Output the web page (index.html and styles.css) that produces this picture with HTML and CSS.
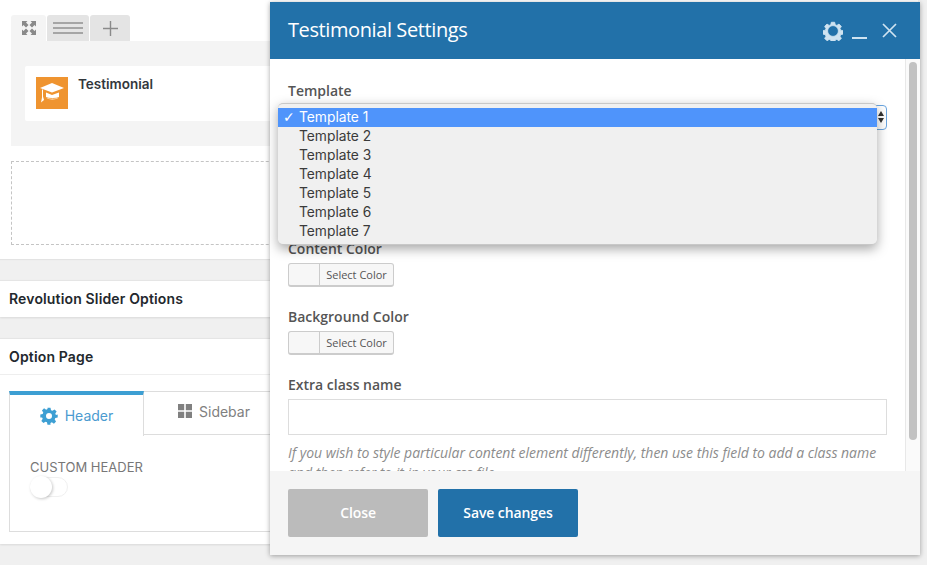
FILE: index.html
```html
<!DOCTYPE html>
<html lang="en">
<head>
    <meta charset="UTF-8">
    <title>Testimonial Settings</title>
    <link rel="stylesheet" href="styles.css">
</head>
<body>
    <div class="builder">
        <div class="row-tabs">
            <span class="row-tab row-tab-active">
                <svg width="14" height="14" viewBox="0 0 14 14" fill="#8a8a8a"><path d="M0 0h5.500L4 1.500 6.500 4 4 6.500 1.500 4 0 5.500zM14 0v5.500L12.500 4 10 6.500 7.500 4 10 1.500 8.500 0zM0 14V8.500L1.500 10 4 7.500 6.500 10 4 12.500 5.500 14zM14 14H8.500l1.500-1.500L7.500 10 10 7.500l2.500 2.500L14 8.500z"/></svg>
            </span>
            <span class="row-tab row-tab-lines"><i></i><i></i><i></i></span>
            <span class="row-tab row-tab-plus">
                <svg width="15" height="15" viewBox="0 0 15 15" fill="#8a8a8a"><path d="M6.800 0h1.400v6.800H15v1.400H8.200V15H6.800V8.200H0V6.800h6.800z"/></svg>
            </span>
        </div>
        <div class="row-body">
            <div class="element">
                <span class="element-icon">
                    <svg width="26" height="22" viewBox="0 0 26 22" fill="#fff"><path d="M13 1 25 6 13 10.500 1 6z"/><path d="M7 10.500v5c2 2.500 10.500 2.500 13 0v-5l-7 2.500z"/><path d="M7 15.400c3 1.500 10 1.500 13 0" fill="none" stroke="#ef9430" stroke-width=".8"/><path d="M3 7.500h1v7l1 3.500-3 2.500 1-5z"/></svg>
                </span>
                <span class="element-name">Testimonial</span>
            </div>
        </div>
        <div class="drop-zone"></div>
    </div>

    <div class="panel panel-slider">
        <h3 class="panel-title">Revolution Slider Options</h3>
    </div>

    <div class="panel panel-options">
        <h3 class="panel-title panel-title-line">Option Page</h3>
        <div class="tabs-wrap">
            <div class="tabs">
                <span class="tab tab-active">
                    <svg width="18" height="18" viewBox="0 0 24 24" fill="#3d9fd3"><path fill-rule="evenodd" d="M10 1h4l.7 3.200 1.900.8 2.800-1.800 2.800 2.800-1.800 2.800.8 1.900L23.600 10v4l-3.200.7-.8 1.900 1.800 2.800-2.800 2.800-2.800-1.800-1.900.8L14 23.600h-4l-.7-3.200-1.900-.8-2.800 1.800-2.800-2.800 1.800-2.800-.8-1.900L.4 14v-4l3.200-.7.8-1.900-1.800-2.800 2.800-2.800 2.800 1.800 1.900-.8zM12 8a4 4 0 1 0 0 8 4 4 0 0 0 0-8z"/></svg>
                    Header
                </span>
                <span class="tab tab-plain">
                    <svg width="14" height="14" viewBox="0 0 14 14" fill="#808080"><path d="M0 0h6.200v6.200H0zM7.800 0H14v6.200H7.800zM0 7.800h6.200V14H0zM7.800 7.800H14V14H7.800z"/></svg>
                    Sidebar
                </span>
            </div>
            <div class="tab-content">
                <div class="field-caption">CUSTOM HEADER</div>
                <div class="switch"><span class="switch-knob"></span></div>
            </div>
        </div>
    </div>

    <div class="modal">
        <div class="modal-head">
            <h2 class="modal-title">Testimonial Settings</h2>
            <div class="modal-actions">
                <svg width="20" height="20" viewBox="0 0 24 24" fill="#cfe3f1" stroke="#cfe3f1" stroke-width="1" stroke-linejoin="round"><path fill-rule="evenodd" d="M10 1.500h4l.7 3 1.900.8 2.600-1.600 2.800 2.800-1.600 2.600.8 1.900 3 .7v4l-3 .7-.8 1.900 1.600 2.600-2.800 2.800-2.600-1.600-1.900.8-.7 3h-4l-.7-3-1.900-.8-2.600 1.600-2.800-2.800 1.600-2.600-.8-1.900-3-.7v-4l3-.7.8-1.900-1.600-2.600 2.800-2.800 2.600 1.600 1.900-.8zM12 5.500a6.500 6.500 0 1 0 0 13 6.500 6.500 0 0 0 0-13z"/></svg>
                <span class="modal-min"></span>
                <svg width="15" height="15" viewBox="0 0 15 15" stroke="#cfe3f1" stroke-width="1.700" fill="none"><path d="M1 1l13 13M14 1 1 14"/></svg>
            </div>
        </div>
        <div class="modal-body">
            <div class="modal-form">
                <div class="form-group form-group-select">
                    <label class="form-label">Template</label>
                    <div class="select-box"><span class="select-arrows"></span></div>
                </div>
                <div class="form-group">
                    <label class="form-label">Content Color</label>
                    <div class="color-btn"><span class="color-swatch"></span><span class="color-text">Select Color</span></div>
                </div>
                <div class="form-group">
                    <label class="form-label">Background Color</label>
                    <div class="color-btn"><span class="color-swatch"></span><span class="color-text">Select Color</span></div>
                </div>
                <div class="form-group">
                    <label class="form-label">Extra class name</label>
                    <div class="text-input"></div>
                    <p class="form-help">If you wish to style particular content element differently, then use this field to add a class name and then refer to it in your css file.</p>
                </div>
            </div>
            <div class="scroll-track"><span class="scroll-thumb"></span></div>
        </div>
        <div class="modal-foot">
            <span class="btn btn-close">Close</span>
            <span class="btn btn-save">Save changes</span>
        </div>

        <ul class="select-menu">
            <li class="select-item select-item-on">Template 1</li>
            <li class="select-item">Template 2</li>
            <li class="select-item">Template 3</li>
            <li class="select-item">Template 4</li>
            <li class="select-item">Template 5</li>
            <li class="select-item">Template 6</li>
            <li class="select-item">Template 7</li>
        </ul>
    </div>
</body>
</html>
```

FILE: styles.css
```css
/* General */
html, body {
    margin: 0;
    height: 565px;
    overflow: hidden;
}

body {
    position: relative;
    background: #f0f0f0;
    font-family: "Inter", "Liberation Sans", Arial, sans-serif;
    color: #23282d;
}

/* Page builder area */
.builder {
    background: #fff;
    height: 259px;
    margin-right: 9px;
    padding: 15px 0 0 11px;
    box-sizing: border-box;
    box-shadow: 0 1px 1px rgba(0, 0, 0, 0.05);
}

.row-tabs {
    display: flex;
    gap: 1px;
    height: 26px;
}

.row-tab {
    display: flex;
    align-items: center;
    justify-content: center;
    background: #e4e4e4;
    border-radius: 3px 3px 0 0;
    height: 26px;
}

.row-tab-active {
    width: 35px;
    background: #f4f4f4;
}

.row-tab-lines {
    width: 42px;
    flex-direction: column;
    gap: 3px;
}

.row-tab-lines i {
    display: block;
    width: 30px;
    height: 2px;
    background: #a5a5a5;
}

.row-tab-plus {
    width: 40px;
}

.row-body {
    background: #f4f4f4;
    height: 105px;
    padding: 25px 0 0 14px;
    box-sizing: border-box;
}

.element {
    display: flex;
    align-items: flex-start;
    background: #fff;
    height: 55px;
    padding: 11px;
    box-sizing: border-box;
    border-radius: 2px;
}

.element-icon {
    display: flex;
    align-items: center;
    justify-content: center;
    width: 32px;
    height: 32px;
    background: #ef9430;
}

.element-name {
    margin-left: 10px;
    font-size: 13.500px;
    line-height: 14px;
    font-weight: 600;
    color: #32373c;
}

.drop-zone {
    height: 84px;
    margin-top: 15px;
    border: 1px dashed #c4c4c4;
    box-sizing: border-box;
}

/* Panels */
.panel {
    background: #fff;
    margin-right: 9px;
    box-shadow: 0 1px 2px rgba(0, 0, 0, 0.1);
    border-top: 1px solid #e5e5e5;
}

.panel-slider {
    height: 37px;
    margin-top: 21px;
    box-sizing: border-box;
}

.panel-options {
    height: 206px;
    margin-top: 21px;
    box-sizing: border-box;
}

.panel-title {
    margin: 0;
    padding: 10px 9px;
    font-size: 14px;
    line-height: 16px;
    font-weight: 600;
    letter-spacing: 0.15px;
}

.panel-title-line {
    height: 36px;
    box-sizing: border-box;
    border-bottom: 1px solid #eee;
}

.tabs-wrap {
    padding: 16px 0 0 9px;
}

.tabs {
    display: flex;
    height: 44px;
}

.tab {
    display: flex;
    align-items: center;
    justify-content: center;
    gap: 7px;
    font-size: 14px;
    box-sizing: border-box;
}

.tab-active {
    width: 135px;
    height: 45px;
    color: #4b9bd0;
    background: #fff;
    border-top: 4px solid #3d9fd3;
    border-left: 1px solid #ddd;
    border-right: 1px solid #ddd;
}

.tab-plain {
    width: 140px;
    height: 44px;
    color: #808080;
    border-top: 1px solid #ddd;
    border-bottom: 1px solid #ddd;
    padding-bottom: 4px;
}

.tab-content {
    height: 97px;
    padding: 25px 20px 0;
    box-sizing: border-box;
    border: 1px solid #ddd;
    border-top: 0;
}

.field-caption {
    font-size: 13px;
    line-height: 14px;
    color: #777;
}

.switch {
    position: relative;
    width: 38px;
    height: 20px;
    margin-top: 3px;
    border: 1px solid #f0f0f0;
    border-radius: 11px;
    box-sizing: border-box;
}

.switch-knob {
    position: absolute;
    left: -1px;
    top: -2px;
    width: 22px;
    height: 22px;
    border-radius: 50%;
    background: #fff;
    box-shadow: 1px 1px 3px rgba(0, 0, 0, 0.22);
}

/* Modal */
.modal {
    position: absolute;
    left: 270px;
    top: 2px;
    width: 650px;
    height: 553px;
    display: flex;
    flex-direction: column;
    background: #fff;
    box-shadow: 0 1px 5px rgba(0, 0, 0, 0.35);
    font-family: "Open Sans", "Liberation Sans", Arial, sans-serif;
}

.modal-head {
    flex: none;
    display: flex;
    align-items: center;
    justify-content: space-between;
    height: 57px;
    padding: 0 23px 0 18px;
    box-sizing: border-box;
    background: #2271a9;
}

.modal-title {
    margin: 0 0 2px;
    font-size: 20px;
    font-weight: 400;
    letter-spacing: -0.4px;
    color: #fff;
}

.modal-actions {
    display: flex;
    align-items: center;
    gap: 9px;
}

.modal-min {
    display: block;
    width: 15px;
    height: 2px;
    margin: 15px 6px 0 0;
    background: #cfe3f1;
}

.modal-body {
    flex: 1;
    min-height: 0;
    display: flex;
    overflow: hidden;
}

.modal-form {
    flex: 1;
    min-width: 0;
    padding: 22px 18px 0;
}

.form-group {
    margin-bottom: 20px;
}

.form-group-select {
    height: 158px;
    margin-bottom: 0;
}

.form-label {
    display: block;
    margin-bottom: 4px;
    font-size: 14px;
    line-height: 20px;
    font-weight: 600;
    color: #555;
}

.select-box {
    position: relative;
    height: 25px;
    border: 1px solid #6aa5e0;
    border-radius: 4px;
    box-sizing: border-box;
    background: #fff;
}

.select-arrows {
    position: absolute;
    right: 2px;
    top: 5px;
    width: 0;
    height: 0;
    border: 3px solid transparent;
    border-bottom: 5px solid #333;
    border-top: 0;
}

.select-arrows::after {
    content: "";
    position: absolute;
    left: -3px;
    top: 7px;
    border: 3px solid transparent;
    border-top: 5px solid #333;
    border-bottom: 0;
}

.color-btn {
    display: flex;
    width: 106px;
    height: 24px;
    box-sizing: border-box;
    border: 1px solid #ccc;
    border-bottom-width: 2px;
    border-radius: 3px;
    background: #f7f7f7;
    overflow: hidden;
}

.color-swatch {
    width: 30px;
    border-right: 1px solid #ccc;
}

.color-text {
    flex: 1;
    text-align: center;
    font-size: 11px;
    line-height: 21px;
    color: #555;
}

.text-input {
    height: 36px;
    box-sizing: border-box;
    border: 1px solid #ddd;
}

.form-help {
    margin: 8px 0 0;
    font-size: 14px;
    letter-spacing: -0.02px;
    line-height: 20px;
    font-style: italic;
    color: #8c8c8c;
}

.scroll-track {
    flex: none;
    width: 15px;
    border-left: 1px solid #e8e8e8;
    box-sizing: border-box;
    padding: 3px 3px 0;
    background: #fafafa;
}

.scroll-thumb {
    display: block;
    height: 378px;
    border-radius: 4px;
    background: #c2c2c2;
}

.modal-foot {
    flex: none;
    display: flex;
    gap: 10px;
    height: 84px;
    padding: 18px;
    box-sizing: border-box;
    background: #f5f5f5;
}

.btn {
    display: block;
    width: 140px;
    height: 48px;
    border-radius: 2px;
    text-align: center;
    font-size: 14px;
    font-weight: 600;
    letter-spacing: -0.1px;
    line-height: 48px;
    color: #fff;
}

.btn-close {
    background: #bbb;
}

.btn-save {
    background: #2271a9;
}

/* Native select popup */
.select-menu {
    position: absolute;
    left: 8px;
    top: 101px;
    width: 599px;
    height: 142px;
    margin: 0;
    padding: 4px 0;
    box-sizing: border-box;
    list-style: none;
    background: #f0f0f0;
    border-top: 1px solid #c8c8c8;
    border-bottom: 1px solid #c8c8c8;
    border-radius: 5px;
    box-shadow: 0 4px 12px rgba(0, 0, 0, 0.35);
    font-family: "Inter", "Liberation Sans", Arial, sans-serif;
}

.select-item {
    position: relative;
    height: 19px;
    padding-left: 21px;
    font-size: 13.800px;
    line-height: 19px;
    color: #3a3a3a;
}

.select-item-on {
    background: #4f94fb;
    color: #fff;
}

.select-item-on::before {
    content: "\2713";
    position: absolute;
    left: 5px;
    font-family: "DejaVu Sans", sans-serif;
    font-size: 14px;
    font-weight: 700;
}
```
